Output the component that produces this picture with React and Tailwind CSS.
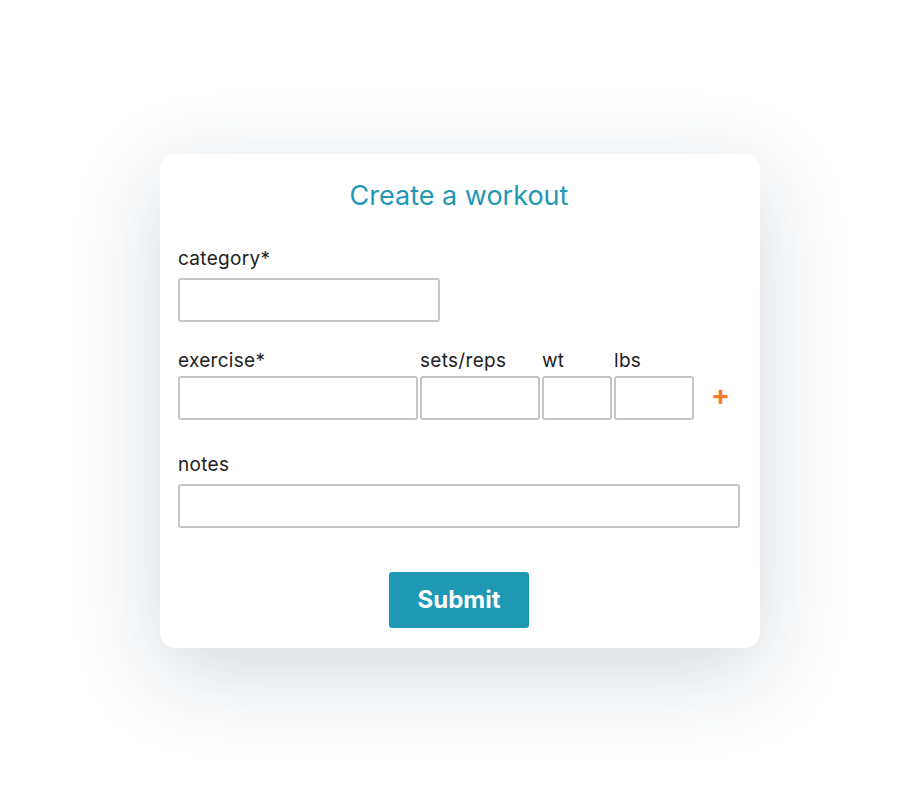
const inputClass = "block h-[44px] rounded-[3px] border-2 border-[#c6c6c6] bg-white px-2 text-[16px] outline-none";

const Field = ({ label, width, labelGap }) => (
  <div className="flex flex-col">
    <label className={`text-[19px] leading-6 tracking-[0.3px] text-[#222] ${labelGap}`}>{label}</label>
    <input type="text" className={`${inputClass} ${width}`} />
  </div>
);

const App = () => {
  return (
    <div
      className="flex h-[800px] w-full items-center justify-center bg-white pt-[2px]"
      style={{ fontFamily: 'Inter, "Noto Sans", "Liberation Sans", sans-serif' }}
    >
      <div className="flex w-[600px] flex-col rounded-2xl bg-white pt-[26px] pb-5 pl-[18px] pr-5 shadow-[0_24px_90px_rgba(40,60,90,0.2)]">
        <h1 className="text-center text-[27px] leading-8 text-[#1e98b3]">Create a workout</h1>

        <div className="mt-[35px]">
          <Field label="category*" width="w-[262px]" labelGap="mb-[7px]" />
        </div>

        <div className="mt-[27px] flex items-end gap-[2px]">
          <Field label="exercise*" width="w-[240px]" labelGap="mb-[3px]" />
          <Field label="sets/reps" width="w-[120px]" labelGap="mb-[3px]" />
          <Field label="wt" width="w-[70px]" labelGap="mb-[3px]" />
          <Field label="lbs" width="w-[80px]" labelGap="mb-[3px]" />
          <button type="button" className="ml-[15px] flex h-[44px] items-center pb-[6px] text-[28px] font-bold leading-none text-[#f47b2a]">
            +
          </button>
        </div>

        <div className="mt-[33px]">
          <Field label="notes" width="w-[562px]" labelGap="mb-[7px]" />
        </div>

        <div className="mt-[44px] flex justify-center">
          <button
            type="submit"
            className="h-[56px] w-[140px] rounded-[3px] bg-[#1e98b3] text-[24px] font-bold text-white"
          >
            Submit
          </button>
        </div>
      </div>
    </div>
  );
};

export default App;
